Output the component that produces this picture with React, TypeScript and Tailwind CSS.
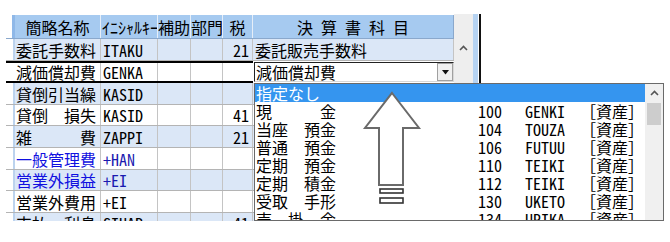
import React from 'react';

type Row = {
  name: string;
  code: string;
  tax?: string;
  kamoku?: string;
  blue?: boolean;
  nameBlue?: boolean;
  codeBlue?: boolean;
  h: string;
};

const rows: Row[] = [
  { name: '委託手数料', code: 'ITAKU', tax: '21', kamoku: '委託販売手数料', blue: true, h: 'h-[22px]' },
  { name: '減価償却費', code: 'GENKA', h: 'h-[22px]' },
  { name: '貸倒引当繰', code: 'KASID', blue: true, h: 'h-[22px]' },
  { name: '貸倒　損失', code: 'KASID', tax: '41', h: 'h-[21px]' },
  { name: '雑　　　費', code: 'ZAPPI', tax: '21', blue: true, h: 'h-[22px]' },
  { name: '一般管理費', code: '+HAN', nameBlue: true, codeBlue: true, h: 'h-[22px]' },
  { name: '営業外損益', code: '+EI', nameBlue: true, codeBlue: true, blue: true, h: 'h-[21px]' },
  { name: '営業外費用', code: '+EI', h: 'h-[22px]' },
  { name: '支払　利息', code: 'SIHAR', tax: '41', blue: true, h: 'h-[21px]' },
];

const items = [
  { name: '現　　　金', no: '100', ini: 'GENKI' },
  { name: '当座　預金', no: '104', ini: 'TOUZA' },
  { name: '普通　預金', no: '106', ini: 'FUTUU' },
  { name: '定期　預金', no: '110', ini: 'TEIKI' },
  { name: '定期　積金', no: '112', ini: 'TEIKI' },
  { name: '受取　手形', no: '130', ini: 'UKETO' },
  { name: '売　掛　金', no: '134', ini: 'URIKA' },
];

function UpChevron() {
  return (
    <svg width="9" height="6" viewBox="0 0 9 6">
      <polyline points="1,5 4.5,1.5 8,5" fill="none" stroke="#555" strokeWidth="1.6" />
    </svg>
  );
}

const cell = 'h-full border-r border-[#c4c4c4] overflow-hidden whitespace-nowrap flex items-center';

function DataRow({ r }: { r: Row }) {
  return (
    <div className={`flex shrink-0 ${r.h} border-b border-[#b4b4b4] ${r.blue ? 'bg-[#dbe7f7]' : 'bg-white'}`}>
      <div className="w-[9px] h-full flex justify-end bg-white">
        <div className="w-[2px] h-full bg-[#bcd3ee]" />
      </div>
      <div className={`${cell} w-[86px] pl-[1px] ${r.nameBlue ? 'text-[#1010e0]' : ''}`}>{r.name}</div>
      <div className={`${cell} w-[57px] pl-[2px] ${r.codeBlue ? 'text-[#1a1ab0]' : ''}`}>{r.code}</div>
      <div className={`${cell} w-[33px]`} />
      <div className={`${cell} w-[32px]`} />
      <div className={`${cell} w-[30px] justify-end pr-[3px]`}>{r.tax}</div>
      <div className={`${cell} w-[201px] pl-[2px]`}>{r.kamoku}</div>
    </div>
  );
}

function SelectedRow({ r }: { r: Row }) {
  return (
    <div className="flex shrink-0 h-[22px] bg-white">
      <div className="flex h-full border-y-2 border-black">
        <div className="w-[9px] h-full" />
        <div className={`${cell} w-[86px] pl-[1px]`}>{r.name}</div>
        <div className={`${cell} w-[57px] pl-[2px]`}>{r.code}</div>
        <div className={`${cell} w-[33px]`} />
        <div className={`${cell} w-[32px]`} />
        <div className="h-full w-[30px]" />
      </div>
      <div className="ml-[1px] mt-[1px] w-[200px] h-[20px] flex border-t border-l border-[#222] border-r border-b border-r-[#d8d8d8] border-b-[#d8d8d8] bg-white">
        <div className="flex-1 flex items-center pl-[1px]">減価償却費</div>
        <div className="w-[16px] h-[18px] bg-[#f0f0f0] border border-[#a0a0a0] flex items-center justify-center">
          <svg width="7" height="5" viewBox="0 0 7 5">
            <polygon points="0,0 7,0 3.5,4.5" fill="#111" />
          </svg>
        </div>
      </div>
    </div>
  );
}

export default function App() {
  return (
    <div className="relative w-[670px] h-[242px] bg-white overflow-hidden text-[16px] leading-[16px] text-black font-['Noto_Sans_Mono_CJK_JP','Noto_Sans_CJK_JP',sans-serif]">
      <div className="flex pt-[14px] pl-[6px]">
        <div className="flex h-[207px] overflow-hidden">
          <div className="flex flex-col w-[448px] pt-[1px]">
            {/* header */}
            <div className="flex shrink-0 h-[24px] border-b border-[#8aa8cc]">
              <div className="w-[9px] h-full flex justify-end bg-white">
                <div className="w-[3px] h-full bg-[#8fb8e8]" />
              </div>
              <div className="w-[86px] h-full bg-[#a6caf0] border-r border-[#e6eef8] flex items-center justify-center">簡略名称</div>
              <div className="w-[57px] h-full bg-[#a6caf0] border-r border-[#e6eef8] flex items-center pl-[1px] overflow-hidden whitespace-nowrap">ｲﾆｼｬﾙｷｰ</div>
              <div className="w-[33px] h-full bg-[#a6caf0] border-r border-[#e6eef8] flex items-center overflow-hidden whitespace-nowrap">補助</div>
              <div className="w-[32px] h-full bg-[#a6caf0] border-r border-[#e6eef8] flex items-center overflow-hidden whitespace-nowrap">部門</div>
              <div className="w-[30px] h-full bg-[#a6caf0] border-r border-[#e6eef8] flex items-center justify-center">税</div>
              <div className="w-[201px] h-full bg-[#a6caf0] border-r border-[#8aa8cc] flex items-center justify-center whitespace-pre">決 算 書 科 目</div>
            </div>
            {rows.map((r, i) => (i === 1 ? <SelectedRow key={i} r={r} /> : <DataRow key={i} r={r} />))}
          </div>
          <div className="w-[19px] bg-[#eeeeee] flex justify-center pt-[31px]">
            <UpChevron />
          </div>
          <div className="w-[5px] bg-[#b6d3f2]" />
          <div className="w-[1px] bg-white" />
          <div className="w-[2px] bg-[#111]" />
        </div>
      </div>

      {/* dropdown list */}
      <div className="absolute left-[254px] top-[83px] w-[410px] h-[138px] border border-[#6a6a6a] bg-white flex overflow-hidden">
        <div className="w-[390px] flex flex-col">
          <div className="h-[18px] shrink-0 bg-[#3595ef] text-white flex items-center pl-[1px]">指定なし</div>
          {items.map((it) => (
            <div key={it.no} className="h-[18px] flex items-center pl-[1px] whitespace-nowrap shrink-0">
              <span className="w-[222px]">{it.name}</span>
              <span className="w-[47px]">{it.no}</span>
              <span className="w-[55px]">{it.ini}</span>
              <span>［資産］</span>
            </div>
          ))}
        </div>
        <div className="w-[18px] bg-[#f0f0f0] flex flex-col items-center">
          <div className="h-[18px] flex items-center">
            <UpChevron />
          </div>
          <div className="mt-[1px] w-[14px] h-[22px] bg-[#cdcdcd]" />
        </div>
      </div>

      {/* big arrow */}
      <svg className="absolute left-[360px] top-[90px]" width="64" height="118" viewBox="0 0 64 118">
        <polygon points="32,3 59,38 43,38 43,95 19,95 19,38 5,38" fill="white" stroke="#6a6a6a" strokeWidth="2" strokeLinejoin="miter" />
        <rect x="20" y="99" width="23" height="4" fill="white" stroke="#333" strokeWidth="1.6" />
        <rect x="20" y="108" width="23" height="5" fill="white" stroke="#333" strokeWidth="1.6" />
      </svg>
    </div>
  );
}
